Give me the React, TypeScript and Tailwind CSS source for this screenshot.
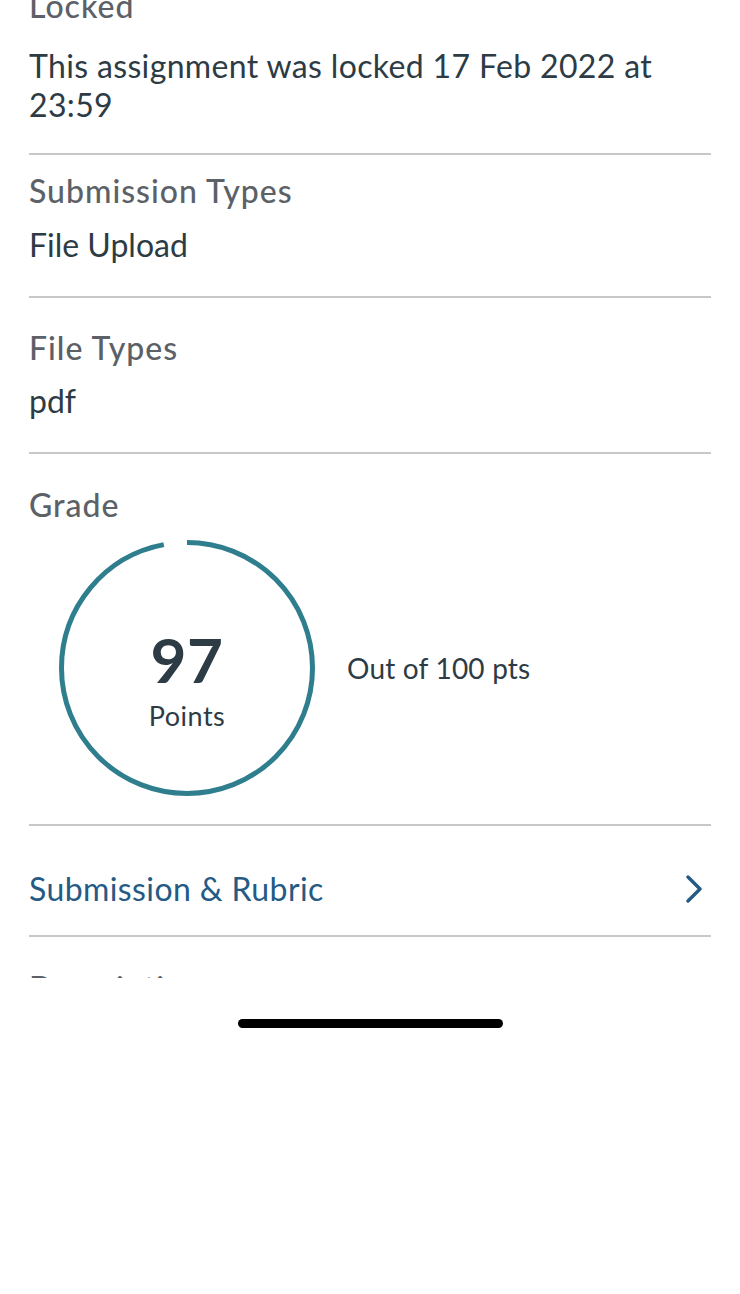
import React from 'react';

const R = 125.5;
const C = 2 * Math.PI * R;

function Divider() {
  return <div className="h-[2px] bg-[#c8c8c8]" />;
}

function Label({ children }: { children: React.ReactNode }) {
  return <div className="font-medium tracking-[1px] text-[#5c6168]">{children}</div>;
}

function GradeRing({ score, total }: { score: number; total: number }) {
  const filled = (score / total) * C;
  return (
    <div className="relative w-[256px] h-[256px] shrink-0">
      <svg width="256" height="256" viewBox="0 0 256 256" className="absolute inset-0">
        <circle
          cx="128"
          cy="128"
          r={R}
          fill="none"
          stroke="#2f7e8e"
          strokeWidth="5"
          strokeDasharray={`${filled} ${C}`}
          transform="rotate(-90 128 128)"
        />
      </svg>
      <div className="absolute inset-0 flex flex-col items-center pt-[88px] text-[#2d3b45]">
        <span className="text-[62px] leading-[62px] font-bold tracking-[0.5px]">{score}</span>
        <span className="mt-[12px] text-[27px] leading-[27px] tracking-[0.5px]">Points</span>
      </div>
    </div>
  );
}

export default function App() {
  return (
    <div className="w-[740px] h-[1294px] bg-white flex flex-col font-['Lato',sans-serif]">
      <div className="h-[978px] overflow-hidden">
        <div className="-mt-[14px] px-[29px] text-[32px] leading-[39px]">
          {/* Locked */}
          <div className="pb-[29px]">
            <Label>Locked</Label>
            <div className="mt-[21px] text-[#2d3b45] tracking-[0.35px]">
              This assignment was locked 17 Feb 2022 at 23:59
            </div>
          </div>
          <Divider />

          <div className="pt-[16px] pb-[32px]">
            <Label>Submission Types</Label>
            <div className="mt-[15px] text-[#2d3b45]">File Upload</div>
          </div>
          <Divider />

          <div className="pt-[30px] pb-[32px]">
            <Label>File Types</Label>
            <div className="mt-[14px] text-[#2d3b45]">pdf</div>
          </div>
          <Divider />

          {/* Grade */}
          <div className="pt-[31px] pb-[28px]">
            <Label>Grade</Label>
            <div className="mt-[16px] flex items-center pl-[30px]">
              <GradeRing score={97} total={100} />
              <span className="ml-[32px] text-[28px] leading-[35px] text-[#2d3b45] tracking-[0.2px]">Out of 100 pts</span>
            </div>
          </div>
          <Divider />

          <div className="pt-[43px] pb-[27px] flex items-center justify-between">
            <span className="text-[#255a85] tracking-[0.4px]">Submission &amp; Rubric</span>
            <svg width="18" height="28" viewBox="0 0 18 28" className="mr-[8px]">
              <path d="M3 2 L15 14 L3 26" fill="none" stroke="#255a85" strokeWidth="3.4" strokeLinecap="round" strokeLinejoin="round" />
            </svg>
          </div>
          <Divider />

          <div className="pt-[31px]">
            <Label>Description</Label>
          </div>
        </div>
      </div>
      <div className="flex justify-center pt-[41px]">
        <div className="w-[265px] h-[9px] rounded-full bg-black" />
      </div>
    </div>
  );
}
